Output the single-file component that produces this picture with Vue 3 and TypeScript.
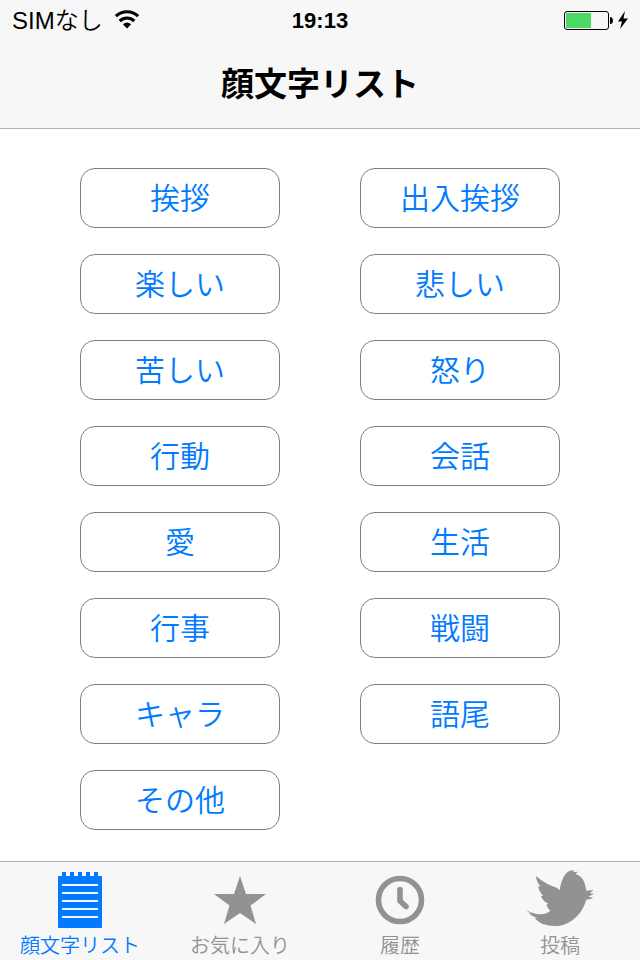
<script setup lang="ts">
import { ref } from 'vue'

type Icon = 'list' | 'star' | 'clock' | 'bird'
interface Tab {
  icon: Icon
  label: string
}

const categories: string[] = [
  '挨拶', '出入挨拶',
  '楽しい', '悲しい',
  '苦しい', '怒り',
  '行動', '会話',
  '愛', '生活',
  '行事', '戦闘',
  'キャラ', '語尾',
  'その他',
]

const tabs: Tab[] = [
  { icon: 'list', label: '顔文字リスト' },
  { icon: 'star', label: 'お気に入り' },
  { icon: 'clock', label: '履歴' },
  { icon: 'bird', label: '投稿' },
]

const active = ref<Icon>('list')
</script>

<template>
  <div class="screen">
    <header class="header">
      <div class="status">
        <div class="carrier">
          <span>SIMなし</span>
          <svg class="wifi" width="26" height="20" viewBox="0 0 26 20" aria-hidden="true">
            <path d="M1.9 6.1C8.2 .3 17.8 .3 24.1 6.1" fill="none" stroke="#000" stroke-width="3.2" />
            <path d="M5.7 11C10 7 16 7 20.3 11" fill="none" stroke="#000" stroke-width="3.2" />
            <path d="M8.900 14.300Q13 10.900 17.100 14.300L13 18.600Z" fill="#000" />
          </svg>
        </div>
        <time class="time">19:13</time>
        <div class="power">
          <svg width="64" height="20" viewBox="0 0 64 20" aria-hidden="true">
            <rect x=".5" y="1.5" width="44" height="18" rx="2.5" fill="none" stroke="#000" />
            <rect x="2" y="3" width="25" height="15" fill="#4cd964" />
            <path d="M46 7H47Q49 8 49 10.5T47 14H46Z" fill="#000" />
            <path d="M61 1L54 11.5H58L56 19L64 8.500H59.5Z" fill="#000" />
          </svg>
        </div>
      </div>
      <h1 class="title">顔文字リスト</h1>
    </header>

    <main class="categories">
      <button v-for="name in categories" :key="name" type="button" class="category">{{ name }}</button>
    </main>

    <nav class="tabs">
      <button
        v-for="tab in tabs"
        :key="tab.icon"
        type="button"
        class="tab"
        :class="{ active: active === tab.icon }"
        @click="active = tab.icon"
      >
        <span class="glyph">
          <svg v-if="tab.icon === 'list'" width="44" height="56" viewBox="0 0 44 56" aria-hidden="true">
            <path
              fill="currentColor"
              d="M1 4H4V0H8V4H12V0H16V4H20V0H24V4H28V0H32V4H36V0H40V4H43Q44 4 44 5V55Q44 56 43 56H1Q0 56 0 55V5Q0 4 1 4Z"
            />
            <path d="M4 13H40M4 21H40M4 29H40M4 37H40M4 45H40" stroke="#f7f7f7" stroke-width="2" />
          </svg>
          <svg v-else-if="tab.icon === 'star'" width="52" height="50" viewBox="0 0 52 50" aria-hidden="true">
            <path
              fill="currentColor"
              d="M26 1L32 19H52L36.5 30.5L42 49L26 38L10 49L15.5 30.5L0 19H20Z"
            />
          </svg>
          <svg v-else-if="tab.icon === 'clock'" width="50" height="50" viewBox="0 0 50 50" aria-hidden="true">
            <circle cx="25" cy="25" r="21.5" fill="none" stroke="currentColor" stroke-width="5.6" />
            <path
              d="M25 14.500V26L31 31.5"
              fill="none"
              stroke="currentColor"
              stroke-width="5.600"
              stroke-linecap="round"
              stroke-linejoin="round"
            />
          </svg>
          <svg v-else width="68" height="60" viewBox="78 60 204 180" aria-hidden="true">
            <path
              fill="currentColor"
              d="M80 181Q98 192 121 193Q143 191 151 182Q143 177 139 164L145 161Q128 154 123 138L130 137Q116 126 115 108L122 109Q109 96 108 78Q132 99 158 109Q171 113 179 120Q183 92 195 74Q206 60 222 61L219 66L234 65L226 72Q243 77 250 91Q257 105 259 122L281 120L269 130L282 131L265 140L280 143Q269 149 259 149Q249 181 231 199Q207 223 176 228Q150 230 126 221Q112 214 104 204L112 203Q94 200 88 190L94 190Q84 188 80 181Z"
            />
          </svg>
        </span>
        <span class="label">{{ tab.label }}</span>
      </button>
    </nav>
  </div>
</template>

<style>
body {
  margin: 0;
  background: #fff;
}
</style>

<style scoped>
.screen {
  display: flex;
  flex-direction: column;
  min-height: 100vh;
  font-family: "Liberation Sans", "Noto Sans CJK JP", sans-serif;
  color: #000;
}

.header {
  background: #f7f7f7;
  border-bottom: 1px solid #b2b2b2;
}

.status {
  box-sizing: border-box;
  display: grid;
  grid-template-columns: 1fr auto 1fr;
  align-items: center;
  height: 40px;
  padding: 2px 12px 0;
}

.carrier {
  display: flex;
  align-items: center;
  gap: 11px;
  font-size: 24px;
  font-weight: 350;
  line-height: 38px;
}

.wifi {
  padding-bottom: 2px;
}

.time {
  font-size: 22px;
  font-weight: 700;
  line-height: 38px;
}

.power {
  display: flex;
  justify-content: flex-end;
  padding-bottom: 2px;
}

.title {
  margin: 0;
  padding-bottom: 4px;
  font-family: "Noto Sans CJK JP", sans-serif;
  font-size: 33px;
  font-weight: 700;
  line-height: 84px;
  text-align: center;
}

.categories {
  flex: 1;
  display: grid;
  grid-template-columns: 1fr 1fr;
  align-content: start;
  gap: 26px 80px;
  padding: 39px 80px 31px;
}

.category {
  box-sizing: border-box;
  height: 60px;
  padding: 0 0 4px;
  border: 1px solid #808080;
  border-radius: 15px;
  background: #fff;
  color: #007aff;
  font-family: "Noto Sans CJK JP", sans-serif;
  font-size: 30px;
  font-weight: 350;
  line-height: 54px;
  cursor: pointer;
}

.tabs {
  display: grid;
  grid-template-columns: repeat(4, 1fr);
  background: #f7f7f7;
  border-top: 1px solid #b2b2b2;
}

.tab {
  display: flex;
  flex-direction: column;
  align-items: center;
  height: 98px;
  padding: 8px 0 0;
  border: 0;
  background: none;
  color: #929292;
  cursor: pointer;
}

.tab.active {
  color: #007aff;
}

.glyph {
  display: flex;
  align-items: center;
  height: 60px;
}

.label {
  font-family: "Noto Sans CJK JP", sans-serif;
  font-size: 20px;
  font-weight: 350;
  line-height: 30px;
}
</style>
